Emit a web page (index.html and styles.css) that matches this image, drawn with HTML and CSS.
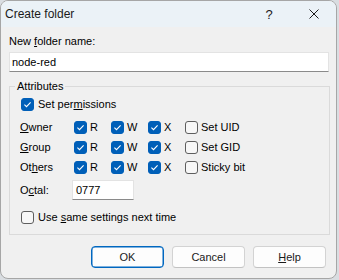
FILE: index.html
```html
<!DOCTYPE html>
<html lang="en">
<head>
    <meta charset="UTF-8">
    <meta name="viewport" content="width=device-width, initial-scale=1.0">
    <title>Create folder</title>
    <link rel="stylesheet" href="styles.css">
</head>
<body>

<div class="window">
    <div class="titlebar">
        <span class="title">Create folder</span>
        <span class="help-btn">?</span>
        <span class="close-btn">
            <svg width="10" height="10" viewBox="0 0 10 10"><path d="M0.5 0.5 L9.5 9.5 M9.5 0.5 L0.5 9.5" stroke="#1b1b1b" stroke-width="1" fill="none"/></svg>
        </span>
    </div>

    <div class="content">
        <div class="field-label">New <u>f</u>older name:</div>
        <div class="textbox name-box">node-red</div>

        <fieldset class="group">
            <legend>Attributes</legend>

            <div class="check perm-toggle">
                <span class="box on"><svg viewBox="0 0 13 13"><path d="M3.4 6.7 L5.5 8.7 L9.6 4.4" stroke="#fff" stroke-width="1.1" fill="none"/></svg></span>
                <span>Set per<u>m</u>issions</span>
            </div>

            <div class="perm-grid">
                <span class="perm-name"><u>O</u>wner</span>
                <span class="check"><span class="box on"><svg viewBox="0 0 13 13"><path d="M3.4 6.7 L5.5 8.7 L9.6 4.4" stroke="#fff" stroke-width="1.1" fill="none"/></svg></span>R</span>
                <span class="check"><span class="box on"><svg viewBox="0 0 13 13"><path d="M3.4 6.7 L5.5 8.7 L9.6 4.4" stroke="#fff" stroke-width="1.1" fill="none"/></svg></span>W</span>
                <span class="check"><span class="box on"><svg viewBox="0 0 13 13"><path d="M3.4 6.7 L5.5 8.7 L9.6 4.4" stroke="#fff" stroke-width="1.1" fill="none"/></svg></span>X</span>
                <span class="check"><span class="box"></span>Set UID</span>

                <span class="perm-name"><u>G</u>roup</span>
                <span class="check"><span class="box on"><svg viewBox="0 0 13 13"><path d="M3.4 6.7 L5.5 8.7 L9.6 4.4" stroke="#fff" stroke-width="1.1" fill="none"/></svg></span>R</span>
                <span class="check"><span class="box on"><svg viewBox="0 0 13 13"><path d="M3.4 6.7 L5.5 8.7 L9.6 4.4" stroke="#fff" stroke-width="1.1" fill="none"/></svg></span>W</span>
                <span class="check"><span class="box on"><svg viewBox="0 0 13 13"><path d="M3.4 6.7 L5.5 8.7 L9.6 4.4" stroke="#fff" stroke-width="1.1" fill="none"/></svg></span>X</span>
                <span class="check"><span class="box"></span>Set GID</span>

                <span class="perm-name">Ot<u>h</u>ers</span>
                <span class="check"><span class="box on"><svg viewBox="0 0 13 13"><path d="M3.4 6.7 L5.5 8.7 L9.6 4.4" stroke="#fff" stroke-width="1.1" fill="none"/></svg></span>R</span>
                <span class="check"><span class="box on"><svg viewBox="0 0 13 13"><path d="M3.4 6.7 L5.5 8.7 L9.6 4.4" stroke="#fff" stroke-width="1.1" fill="none"/></svg></span>W</span>
                <span class="check"><span class="box on"><svg viewBox="0 0 13 13"><path d="M3.4 6.7 L5.5 8.7 L9.6 4.4" stroke="#fff" stroke-width="1.1" fill="none"/></svg></span>X</span>
                <span class="check"><span class="box"></span>Sticky bit</span>
            </div>

            <div class="octal-row">
                <span class="octal-label">O<u>c</u>tal:</span>
                <div class="textbox octal-box">0777</div>
            </div>

            <div class="check same-row">
                <span class="box"></span>
                <span>Use <u>s</u>ame settings next time</span>
            </div>
        </fieldset>

        <div class="buttons">
            <button type="button" class="btn default">OK</button>
            <button type="button" class="btn">Cancel</button>
            <button type="button" class="btn"><u>H</u>elp</button>
        </div>
    </div>
</div>

</body>
</html>
```

FILE: styles.css
```css
body {
    margin: 0;
    background: #d9dde1;
    font-family: "Liberation Sans", Arial, sans-serif;
    font-size: 11px;
    color: #000;
}
.window {
    box-sizing: border-box;
    width: 337px;
    height: 279px;
    background: #f0f0f0;
    border: 1px solid #a6a6a6;
    border-radius: 8px;
    overflow: hidden;
}
.titlebar {
    display: flex;
    align-items: center;
    height: 26px;
    background: #ebf2f7;
}
.title {
    flex: 1;
    padding-left: 4px;
    font-size: 12px;
    color: #1a1a1a;
}
.help-btn {
    width: 46px;
    text-align: center;
    font-size: 13px;
    color: #1b1b1b;
}
.close-btn {
    width: 44px;
    display: flex;
    justify-content: center;
    align-items: center;
}
.content {
    padding: 7px 6px 0 8px;
}
.field-label {
    height: 15px;
    line-height: 15px;
}
.textbox {
    box-sizing: border-box;
    height: 20px;
    line-height: 18px;
    padding: 0 2px;
    background: #fff;
    border: 1px solid #e3e3e3;
    border-bottom-color: #8a8a8a;
}
.name-box {
    margin: 3px 1px 0 0;
}
.group {
    margin: 7px 0 0;
    padding: 2px 10px 9px;
    border: 1px solid #dadada;
    min-width: 0;
}
.group legend {
    padding: 0 2px;
    margin-left: -5px;
    line-height: 15px;
}
.check {
    display: flex;
    align-items: center;
    gap: 3px;
}
.box {
    box-sizing: border-box;
    display: block;
    width: 13px;
    height: 13px;
    flex-shrink: 0;
    border: 1px solid #5e5e5e;
    border-radius: 3px;
    background: #f7f7f7;
}
.box.on {
    background: #005fb8;
    border-color: #005fb8;
}
.box svg {
    display: block;
    width: 13px;
    height: 13px;
    margin: -1px;
}
.perm-toggle {
    height: 16px;
    margin-left: 1px;
    gap: 4px;
}
.perm-grid {
    display: grid;
    grid-template-columns: 54px 37px 37px 37px auto;
    grid-auto-rows: 20px;
    align-items: center;
    margin-top: 5px;
}
.octal-row {
    display: flex;
    align-items: center;
    height: 20px;
    margin-top: 3px;
}
.octal-label {
    width: 52px;
}
.octal-box {
    width: 62px;
    padding-left: 3px;
}
.same-row {
    height: 16px;
    margin-top: 9px;
    margin-left: 1px;
    gap: 4px;
}
.buttons {
    display: flex;
    justify-content: flex-end;
    gap: 8px;
    margin: 11px 4px 0 0;
}
.btn {
    box-sizing: border-box;
    width: 73px;
    height: 22px;
    padding: 0;
    font-family: inherit;
    font-size: 11px;
    color: #1a1a1a;
    background: #fdfdfd;
    border: 1px solid #d3d3d3;
    border-bottom-color: #c2c2c2;
    border-radius: 4px;
}
.btn.default {
    border: 1px solid #0067c0;
    box-shadow: inset 0 0 0 0.5px #0067c0;
}
```
